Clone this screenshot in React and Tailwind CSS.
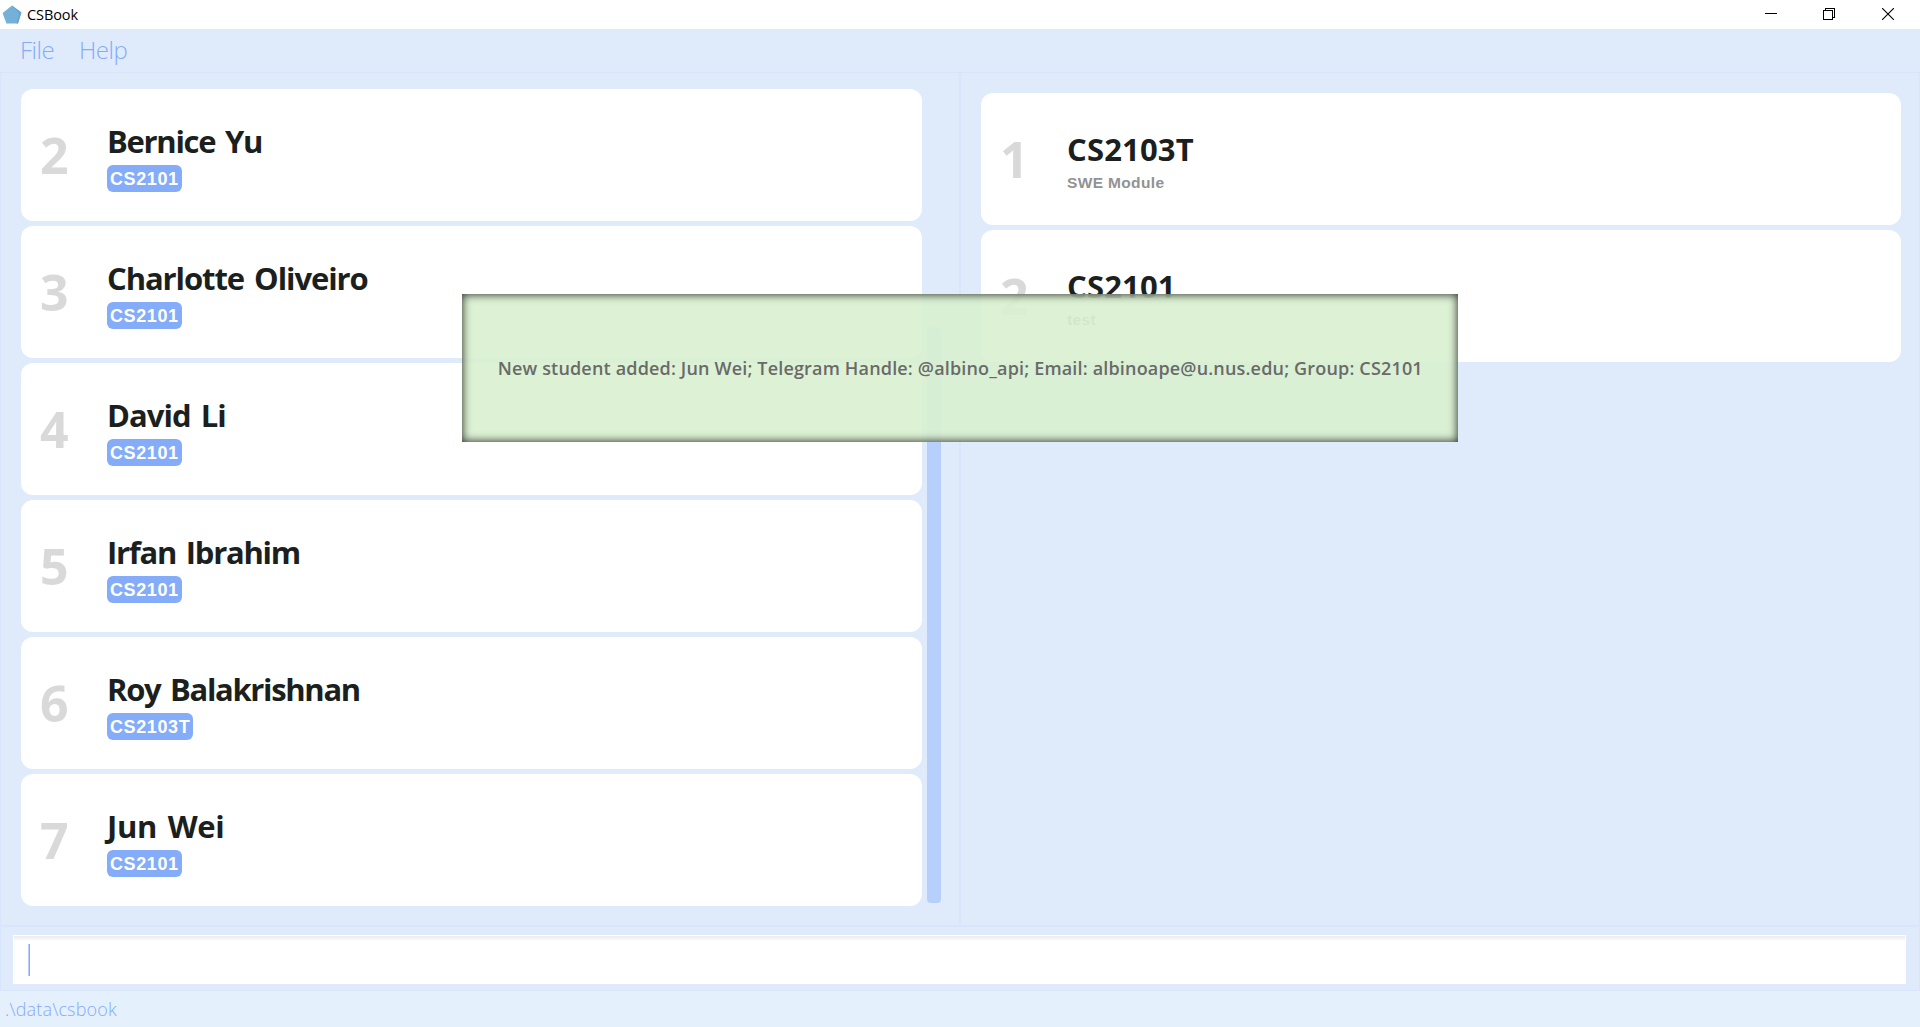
const students = [
  { index: 2, name: 'Bernice Yu', group: 'CS2101', tracking: 'tracking-[-1.3px]' },
  { index: 3, name: 'Charlotte Oliveiro', group: 'CS2101', tracking: 'tracking-[-1.08px]' },
  { index: 4, name: 'David Li', group: 'CS2101', tracking: 'tracking-[-0.95px]' },
  { index: 5, name: 'Irfan Ibrahim', group: 'CS2101', tracking: 'tracking-[-1.28px]' },
  { index: 6, name: 'Roy Balakrishnan', group: 'CS2103T', tracking: 'tracking-[-1.33px]' },
  { index: 7, name: 'Jun Wei', group: 'CS2101', tracking: 'tracking-[-0.35px]' },
];

const modules = [
  { index: 1, name: 'CS2103T', description: 'SWE Module' },
  { index: 2, name: 'CS2101', description: 'test' },
];

function TitleBar() {
  return (
    <header className="flex h-[29px] shrink-0 items-center justify-between bg-white">
      <div className="flex items-center pl-[2px]">
        <svg width="20" height="20" viewBox="0 0 20 20">
          <path d="M10 .5 19.4 7.5 16 18.6H4.4L.6 8Z" fill="#74b0d8" />
          <path d="M10 .5 19.4 7.5 16 18.6h-1.4L17.2 8.5Z" fill="#67a5cf" />
        </svg>
        <span className="ml-[5px] font-['Open_Sans'] text-[14.5px] leading-5 tracking-[-0.1px] text-black">CSBook</span>
      </div>
      <div className="flex items-center pr-[26px] pb-px">
        <svg className="mr-[46px]" width="12" height="12" viewBox="0 0 12 12" shapeRendering="crispEdges">
          <path d="M0 5h12v1H0z" fill="#000" />
        </svg>
        <svg className="mr-[47px]" width="12" height="12" viewBox="0 0 12 12" fill="none" stroke="#000" shapeRendering="crispEdges">
          <path d="M.5 2.5h9v9h-9zM2.5 2.5v-2h9v9h-2" />
        </svg>
        <svg width="12" height="12" viewBox="0 0 12 12" stroke="#000" strokeWidth="1.1">
          <path d="M0 0 12 12M12 0 0 12" />
        </svg>
      </div>
    </header>
  );
}

function Card({ index, name, tracking, children }) {
  return (
    <li className="flex h-[132px] shrink-0 rounded-[12px] bg-white font-['Open_Sans'] font-bold">
      <div className="flex w-[86px] items-center pl-[19px]">
        <span className="text-[50px] leading-none text-[#d9d9d9]">{index}</span>
      </div>
      <div className="flex flex-col items-start justify-center">
        <span className={`text-[31px] leading-[42px] [word-spacing:3px] whitespace-nowrap text-[#1b1f1e] ${tracking}`}>{name}</span>
        {children}
      </div>
    </li>
  );
}

export default function App() {
  return (
    <div className="relative flex h-[1027px] w-[1920px] flex-col overflow-hidden bg-[#dfebfb]">
      <TitleBar />
      <nav className="flex h-[43px] shrink-0 gap-[25px] pl-[20px] font-['Open_Sans'] text-[24px] leading-[41px] font-light tracking-[-0.5px] text-[#84acf9]">
        <span>File</span>
        <span>Help</span>
      </nav>
      <main className="flex h-[854px] shrink-0 border border-[#d8e6fb]">
        <section className="flex w-[959px] shrink-0 border-r border-[#d8e6fb] pt-4 pl-5">
          <ul className="flex w-[901px] flex-col gap-[5px]">
            {students.map((s) => (
              <Card key={s.index} index={s.index} name={s.name} tracking={`mt-[2px] ${s.tracking}`}>
                <span className="mt-[3px] h-[27px] rounded-[6px] bg-[#84acf9] px-[3px] font-['Liberation_Sans'] text-[18px] leading-[28px] tracking-[0.6px] text-white">
                  {s.group}
                </span>
              </Card>
            ))}
          </ul>
          <div className="mt-[238px] ml-[5px] h-[576px] w-[13.5px] rounded-[4px] bg-[#b7d0fb]" />
        </section>
        <section className="flex-1 border-l border-[#d8e6fb] pt-5 pr-[18px] pl-5">
          <ul className="flex flex-col gap-[5px]">
            {modules.map((m) => (
              <Card key={m.index} index={m.index} name={m.name} tracking="tracking-[0.15px] mt-[4px]">
                <span className="font-['Liberation_Sans'] text-[15.5px] leading-[25px] tracking-[0.35px] text-[#929292]">
                  {m.description}
                </span>
              </Card>
            ))}
          </ul>
        </section>
      </main>
      <div className="h-[65px] shrink-0 border border-[#d8e6fb] px-3 pt-2">
        <div className="flex h-[49px] w-[1893px] border border-white bg-white pt-2 pl-[14px] shadow-[inset_0_4px_3px_-1px_#eeeeee]">
          <span className="h-8 w-[2px] border-l border-[#b7d0fb] bg-[#84acf9]" />
        </div>
      </div>
      <footer className="flex-1 bg-[#e5f0fd] pl-[5px] font-['Open_Sans'] text-[18px] leading-[37px] font-light tracking-[0.15px] text-[#84acf9]">
        .\data\csbook
      </footer>
      <div className="absolute top-[294px] left-[461.5px] flex h-[147.5px] w-[996.5px] items-center justify-center bg-[#d9f1cf]/90 pt-px pl-px shadow-[inset_0_0_9px_1px_rgba(0,0,0,0.75)]">
        <span className="font-['Open_Sans'] text-[18px] font-semibold tracking-[0.17px] whitespace-nowrap text-[#6a6a6a]">
          New student added: Jun Wei; Telegram Handle: @albino_api; Email: albinoape@u.nus.edu; Group: CS2101
        </span>
      </div>
    </div>
  );
}
